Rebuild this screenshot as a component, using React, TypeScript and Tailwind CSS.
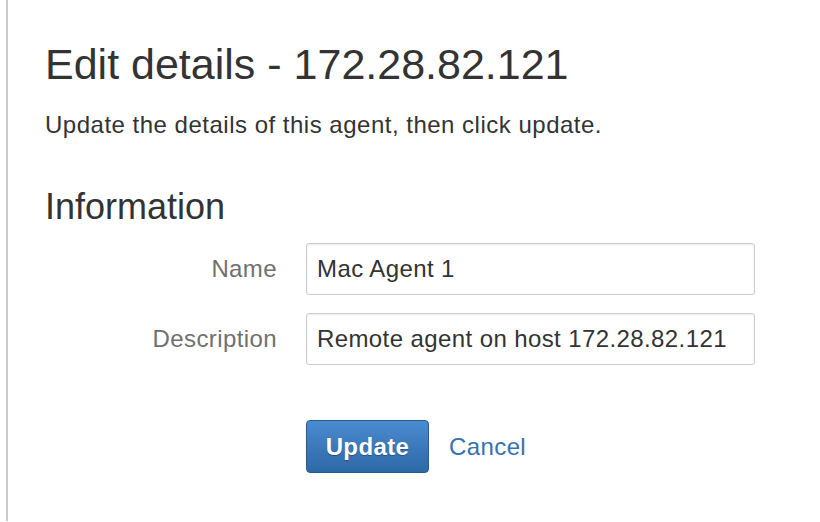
import React from 'react';

const font = { fontFamily: '"Liberation Sans", Arial, sans-serif' };

const Field = ({ label, value }: { label: string; value: string }) => (
  <div className="flex items-center">
    <label className="w-[261px] pr-[29px] text-right text-[24px] tracking-[0.4px] text-[#707070]">{label}</label>
    <div className="flex h-[52px] w-[449px] items-center rounded-[3px] border border-[#cccccc] bg-white px-[10px] text-[24px] tracking-[0.4px] text-[#333333] shadow-[inset_0_1px_2px_rgba(0,0,0,0.08)]">
      {value}
    </div>
  </div>
);

export default function App() {
  return (
    <div className="flex h-[522px] w-[820px] bg-white" style={font}>
      <div className="ml-[6px] h-[521px] w-[2px] bg-[#cccccc]" />
      <div className="pl-[37px] pt-[38px]">
        <h1 className="text-[43px] leading-[52px] text-[#333333]">Edit details - 172.28.82.121</h1>
        <p className="mt-[19px] text-[24px] leading-[32px] tracking-[0.5px] text-[#333333]">
          Update the details of this agent, then click update.
        </p>
        <h2 className="mt-[44px] text-[36px] leading-[44px] text-[#333333]">Information</h2>
        <div className="mt-[14px] flex flex-col gap-[18px]">
          <Field label="Name" value="Mac Agent 1" />
          <Field label="Description" value="Remote agent on host 172.28.82.121" />
        </div>
        <div className="ml-[261px] mt-[55px] flex items-center gap-[20px]">
          <button className="h-[53px] w-[123px] rounded-[4px] border border-[#2a5a8c] bg-gradient-to-b from-[#4a8bd0] to-[#2e68a6] text-[24px] font-bold tracking-[0.4px] text-white [text-shadow:0_1px_1px_rgba(0,0,0,0.3)]">
            Update
          </button>
          <a href="#" className="text-[24px] tracking-[0.4px] text-[#3572b0]">Cancel</a>
        </div>
      </div>
    </div>
  );
}
